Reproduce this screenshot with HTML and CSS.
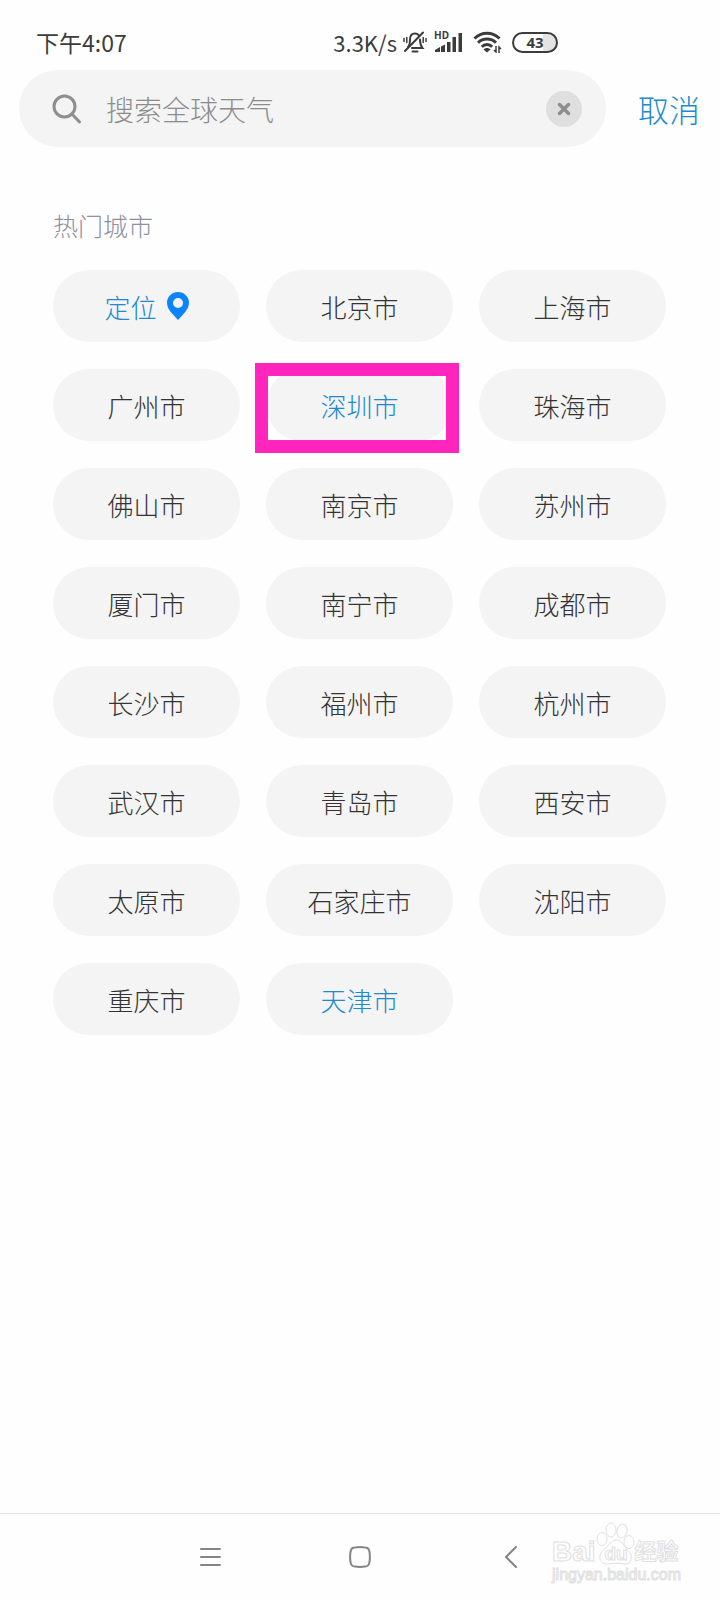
FILE: index.html
```html
<!DOCTYPE html>
<html lang="zh-CN">
<head>
  <meta charset="UTF-8">
  <meta name="viewport" content="width=device-width, initial-scale=1.0">
  <title>搜索全球天气</title>
  <link rel="stylesheet" href="styles.css">
</head>
<body>

<div class="status-bar">
  <span class="time">下午4:07</span>
  <div class="status-icons">
    <span class="speed">3.3K/s</span>
    <!-- muted bell -->
    <svg class="icon-bell" width="24" height="22" viewBox="0 0 24 22" fill="none" stroke="#3c3c3c" stroke-width="2" stroke-linecap="round">
      <path d="M5 16c1.600-1.500 2-3 2-7.500C7 4.500 9 2.500 12 2.500c1.800 0 3 .7 3.800 1.800M17 8.500c0 4 .5 6 2.500 8.500H9"/>
      <path d="M2 20L20 1.500"/>
      <path d="M9.500 20.500h5"/>
      <path d="M3.800 6.500v5M1 7.500v3M20.200 6.500v5M23 7.500v3" stroke-width="1.500"/>
    </svg>
    <!-- mobile signal -->
    <svg class="icon-signal" width="29" height="26" viewBox="0 0 29 26" fill="#3c3c3c">
      <text x="0" y="10" class="hd">HD</text>
      <path d="M1 23v-2l5-3v5zM7 17.500l4-2V23H7zM13 13h3.500v10H13zM18.500 8H22v15h-3.500zM24.500 4H28v19h-3.500z"/>
    </svg>
    <!-- wifi -->
    <svg class="icon-wifi" width="29" height="22" viewBox="0 0 29 22" fill="none" stroke="#3c3c3c" stroke-width="3">
      <path d="M1.500 7.500C8.500 .5 19.500 .5 26.500 7.500"/>
      <path d="M5 11.800c5-5 13-5 18 0"/>
      <path d="M8.800 15.800c3-3 7.400-3 10.400 0"/>
      <path d="M10.500 18.500c2-2 5-2 7 0L14 21.500z" fill="#3c3c3c" stroke="none"/>
      <path d="M23 15v6l-2-2M26 22v-6l2 2" stroke-width="1.500"/>
    </svg>
    <span class="battery">43</span>
  </div>
</div>

<form class="search-row">
  <div class="search-box">
    <svg class="icon-search" width="30" height="30" viewBox="0 0 30 30" fill="none" stroke="#8e8e8e" stroke-width="3" stroke-linecap="round">
      <circle cx="12.500" cy="12.500" r="10.500"/>
      <path d="M20 20l7.500 8"/>
    </svg>
    <input class="search-input" type="text" placeholder="搜索全球天气" aria-label="搜索全球天气">
    <button class="clear" type="reset" aria-label="清除">
      <svg width="14" height="14" viewBox="0 0 14 14" stroke="#8e8e8e" stroke-width="3.500" stroke-linecap="round">
        <path d="M2.500 2.500l9 9M11.500 2.500l-9 9"/>
      </svg>
    </button>
  </div>
  <button class="cancel" type="button">取消</button>
</form>

<main class="cities">
  <h2>热门城市</h2>
  <div class="city-grid">
    <button class="city active">定位
      <svg width="22" height="28" viewBox="0 0 22 28">
        <path fill="#0d84ff" fill-rule="evenodd" d="M11 0C4.900 0 0 4.800 0 10.800c0 3.200 1.400 6.200 3.500 9L11 28l7.500-8.200c2.100-2.800 3.500-5.800 3.500-9C22 4.800 17.100 0 11 0zm0 6a5 5 0 1 1 0 10 5 5 0 0 1 0-10z"/>
      </svg>
    </button>
    <button class="city">北京市</button>
    <button class="city">上海市</button>
    <button class="city">广州市</button>
    <button class="city active marked">深圳市</button>
    <button class="city">珠海市</button>
    <button class="city">佛山市</button>
    <button class="city">南京市</button>
    <button class="city">苏州市</button>
    <button class="city">厦门市</button>
    <button class="city">南宁市</button>
    <button class="city">成都市</button>
    <button class="city">长沙市</button>
    <button class="city">福州市</button>
    <button class="city">杭州市</button>
    <button class="city">武汉市</button>
    <button class="city">青岛市</button>
    <button class="city">西安市</button>
    <button class="city">太原市</button>
    <button class="city">石家庄市</button>
    <button class="city">沈阳市</button>
    <button class="city">重庆市</button>
    <button class="city active">天津市</button>
  </div>
</main>

<nav class="nav-bar">
  <button aria-label="菜单">
    <svg width="22" height="22" viewBox="0 0 22 22" fill="none" stroke="#858585" stroke-width="2" stroke-linecap="round">
      <path d="M2 3h19M2 11h19M2 19h19"/>
    </svg>
  </button>
  <button aria-label="主页">
    <svg width="22" height="22" viewBox="0 0 22 22" fill="none" stroke="#858585" stroke-width="2">
      <path d="M6 1.500Q11 .7 16 1.500Q20 1.500 20.500 6Q21.300 11 20.500 16Q20 20.500 16 20.500Q11 21.300 6 20.500Q2 20.500 1.500 16Q.7 11 1.500 6Q2 1.500 6 1.500z"/>
    </svg>
  </button>
  <button aria-label="返回">
    <svg width="22" height="22" viewBox="0 0 22 22" fill="none" stroke="#858585" stroke-width="2" stroke-linecap="round" stroke-linejoin="round">
      <path d="M17 1L7 11l10 10"/>
    </svg>
  </button>
  <div class="watermark">
    <div class="brand">
      <span class="bai">Bai</span>
      <svg width="39" height="44" viewBox="0 0 39 44" fill="#fefefe" stroke="#e0e0e0">
        <ellipse cx="6" cy="17" rx="5" ry="6.500"/>
        <ellipse cx="15" cy="8" rx="5" ry="7"/>
        <ellipse cx="26" cy="9" rx="5" ry="7" transform="rotate(12 26 9)"/>
        <ellipse cx="33" cy="20" rx="5" ry="6.500"/>
        <path d="M20 18c-5 0-7 5-10 8-4 3-7 6-6 11 1 4 4 5 8 5 5-1 11-1 16 0 4 0 7-1 7-5 1-5-2-8-5-11-3-3-5-8-10-8z"/>
        <text class="du" x="20" y="38" text-anchor="middle">du</text>
      </svg>
      <span class="jy">经验</span>
    </div>
    <div class="site">jingyan.baidu.com</div>
  </div>
</nav>

</body>
</html>
```
FILE: styles.css
```css
:root {
  --bg: #fefefe;
  --pill: #f4f4f4;
  --blue: #2189d0;
  --dark: #3c3c3c;
  --grey: #8c8c8c;
}
* {
  box-sizing: border-box;
}
body {
  font-family: "Noto Sans CJK SC", sans-serif;
  font-weight: 300;
  background-color: var(--bg);
  color: #333333;
  margin: 0;
  min-height: 100vh;
  display: flex;
  flex-direction: column;
}
button {
  font-family: inherit;
  font-weight: inherit;
  border: none;
  background: none;
  padding: 0;
  cursor: pointer;
}
svg {
  display: block;
  flex: none;
}

/* status bar */
.status-bar {
  display: flex;
  align-items: center;
  justify-content: space-between;
  height: 70px;
  padding: 14px 162px 0 36px;
  color: var(--dark);
  font-size: 23px;
  font-weight: 400;
}
.status-icons {
  display: flex;
  align-items: center;
  gap: 6px;
}
.speed {
  font-size: 22px;
}
.hd {
  font: 700 10px "Noto Sans", sans-serif;
}
.icon-signal {
  margin: 0 4px 0 1px;
}
.battery {
  width: 46px;
  height: 21px;
  margin-left: 4px;
  border: 2px solid var(--dark);
  border-radius: 11px;
  background: linear-gradient(to right, var(--bg) 70%, #e4e4e4 70%);
  font: 700 15px/17px "Noto Sans", sans-serif;
  text-align: center;
}

/* search */
.search-row {
  display: flex;
  align-items: center;
  padding: 0 20px 0 19px;
  gap: 32px;
}
.search-box {
  flex: 1;
  min-width: 0;
  display: flex;
  align-items: center;
  height: 77px;
  padding: 0 24px 0 33px;
  border-radius: 39px;
  background-color: var(--pill);
}
.search-input {
  flex: 1;
  min-width: 0;
  margin-left: 24px;
  padding: 0;
  border: none;
  outline: none;
  background: none;
  font-family: inherit;
  font-size: 28px;
  font-weight: 300;
  color: #333333;
}
.search-input::placeholder {
  color: var(--grey);
}
.clear {
  display: flex;
  align-items: center;
  justify-content: center;
  width: 36px;
  height: 36px;
  border-radius: 50%;
  background-color: #dfdfdf;
}
.cancel {
  font-size: 31px;
  color: var(--blue);
}

/* city list */
.cities {
  flex: 1;
  padding: 60px 54px 0 53px;
}
.cities h2 {
  margin: 0 0 27px;
  font-size: 25px;
  line-height: 36px;
  font-weight: 300;
  color: #8e90a0;
}
.city-grid {
  display: grid;
  grid-template-columns: repeat(3, 1fr);
  gap: 27px 26px;
}
.city {
  position: relative;
  display: flex;
  align-items: center;
  justify-content: center;
  gap: 10px;
  height: 72px;
  border-radius: 36px;
  background-color: var(--pill);
  color: #333333;
  font-size: 26px;
}
.city.active {
  color: var(--blue);
}
.marked::after {
  content: "";
  position: absolute;
  top: -6px;
  right: -6px;
  bottom: -12px;
  left: -11px;
  border: 13px solid #ff25bd;
}

/* bottom navigation */
.nav-bar {
  position: relative;
  display: flex;
  justify-content: center;
  height: 87px;
  border-top: 1px solid #e4e4e4;
}
.nav-bar button {
  display: flex;
  align-items: center;
  justify-content: center;
  width: 150px;
}
.watermark {
  position: absolute;
  right: 39px;
  top: 8px;
  font-family: "Liberation Sans", "Noto Sans CJK SC", sans-serif;
  color: var(--bg);
  -webkit-text-stroke: 1px #e0e0e0;
}
.brand {
  display: flex;
  align-items: flex-end;
  font-weight: 700;
  line-height: 28px;
  height: 44px;
}
.bai {
  font-size: 28px;
}
.jy {
  font-size: 22px;
}
.du {
  font-size: 19px;
  font-weight: 700;
}
.site {
  font-size: 16px;
  line-height: 18px;
  font-weight: 400;
}
```
